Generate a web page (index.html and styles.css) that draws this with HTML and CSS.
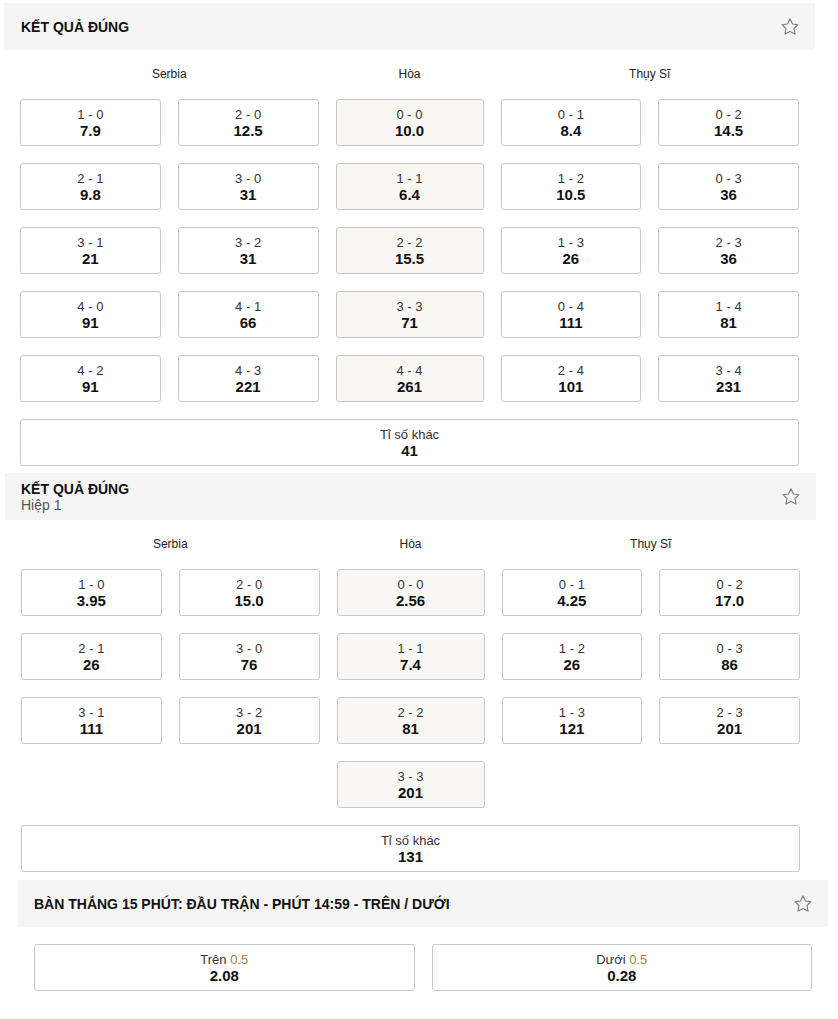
FILE: index.html
```html
<!DOCTYPE html>
<html lang="vi">
<head>
<meta charset="utf-8">
<title>Kết quả đúng</title>
<link rel="stylesheet" href="styles.css">
</head>
<body>

<section class="market market-1">
  <div class="m-head">
    <div class="m-titles"><div class="m-title">KẾT QUẢ ĐÚNG</div></div>
    <svg class="star" viewBox="0 0 20 20" width="20" height="20"><path d="M10 1.8 L12.5 7 L18 7.7 L14 11.5 L15.1 17.1 L10 14.4 L4.9 17.1 L6 11.5 L2 7.7 L7.5 7 Z" fill="none" stroke="#7a7a7a" stroke-width="1.1" stroke-linejoin="round"/></svg>
  </div>
  <div class="m-body">
    <div class="grid5">
      <div class="lbl lbl-home">Serbia</div>
      <div class="lbl lbl-draw">Hòa</div>
      <div class="lbl lbl-away">Thụy Sĩ</div>

      <div class="odd"><span class="o-name">1 - 0</span><span class="o-val">7.9</span></div>
      <div class="odd"><span class="o-name">2 - 0</span><span class="o-val">12.5</span></div>
      <div class="odd draw"><span class="o-name">0 - 0</span><span class="o-val">10.0</span></div>
      <div class="odd"><span class="o-name">0 - 1</span><span class="o-val">8.4</span></div>
      <div class="odd"><span class="o-name">0 - 2</span><span class="o-val">14.5</span></div>

      <div class="odd"><span class="o-name">2 - 1</span><span class="o-val">9.8</span></div>
      <div class="odd"><span class="o-name">3 - 0</span><span class="o-val">31</span></div>
      <div class="odd draw"><span class="o-name">1 - 1</span><span class="o-val">6.4</span></div>
      <div class="odd"><span class="o-name">1 - 2</span><span class="o-val">10.5</span></div>
      <div class="odd"><span class="o-name">0 - 3</span><span class="o-val">36</span></div>

      <div class="odd"><span class="o-name">3 - 1</span><span class="o-val">21</span></div>
      <div class="odd"><span class="o-name">3 - 2</span><span class="o-val">31</span></div>
      <div class="odd draw"><span class="o-name">2 - 2</span><span class="o-val">15.5</span></div>
      <div class="odd"><span class="o-name">1 - 3</span><span class="o-val">26</span></div>
      <div class="odd"><span class="o-name">2 - 3</span><span class="o-val">36</span></div>

      <div class="odd"><span class="o-name">4 - 0</span><span class="o-val">91</span></div>
      <div class="odd"><span class="o-name">4 - 1</span><span class="o-val">66</span></div>
      <div class="odd draw"><span class="o-name">3 - 3</span><span class="o-val">71</span></div>
      <div class="odd"><span class="o-name">0 - 4</span><span class="o-val">111</span></div>
      <div class="odd"><span class="o-name">1 - 4</span><span class="o-val">81</span></div>

      <div class="odd"><span class="o-name">4 - 2</span><span class="o-val">91</span></div>
      <div class="odd"><span class="o-name">4 - 3</span><span class="o-val">221</span></div>
      <div class="odd draw"><span class="o-name">4 - 4</span><span class="o-val">261</span></div>
      <div class="odd"><span class="o-name">2 - 4</span><span class="o-val">101</span></div>
      <div class="odd"><span class="o-name">3 - 4</span><span class="o-val">231</span></div>

      <div class="odd full"><span class="o-name">Tỉ số khác</span><span class="o-val">41</span></div>
    </div>
  </div>
</section>

<section class="market market-2">
  <div class="m-head">
    <div class="m-titles"><div class="m-title">KẾT QUẢ ĐÚNG</div><div class="m-sub">Hiệp 1</div></div>
    <svg class="star" viewBox="0 0 20 20" width="20" height="20"><path d="M10 1.8 L12.5 7 L18 7.7 L14 11.5 L15.1 17.1 L10 14.4 L4.9 17.1 L6 11.5 L2 7.7 L7.5 7 Z" fill="none" stroke="#7a7a7a" stroke-width="1.1" stroke-linejoin="round"/></svg>
  </div>
  <div class="m-body">
    <div class="grid5">
      <div class="lbl lbl-home">Serbia</div>
      <div class="lbl lbl-draw">Hòa</div>
      <div class="lbl lbl-away">Thụy Sĩ</div>

      <div class="odd"><span class="o-name">1 - 0</span><span class="o-val">3.95</span></div>
      <div class="odd"><span class="o-name">2 - 0</span><span class="o-val">15.0</span></div>
      <div class="odd draw"><span class="o-name">0 - 0</span><span class="o-val">2.56</span></div>
      <div class="odd"><span class="o-name">0 - 1</span><span class="o-val">4.25</span></div>
      <div class="odd"><span class="o-name">0 - 2</span><span class="o-val">17.0</span></div>

      <div class="odd"><span class="o-name">2 - 1</span><span class="o-val">26</span></div>
      <div class="odd"><span class="o-name">3 - 0</span><span class="o-val">76</span></div>
      <div class="odd draw"><span class="o-name">1 - 1</span><span class="o-val">7.4</span></div>
      <div class="odd"><span class="o-name">1 - 2</span><span class="o-val">26</span></div>
      <div class="odd"><span class="o-name">0 - 3</span><span class="o-val">86</span></div>

      <div class="odd"><span class="o-name">3 - 1</span><span class="o-val">111</span></div>
      <div class="odd"><span class="o-name">3 - 2</span><span class="o-val">201</span></div>
      <div class="odd draw"><span class="o-name">2 - 2</span><span class="o-val">81</span></div>
      <div class="odd"><span class="o-name">1 - 3</span><span class="o-val">121</span></div>
      <div class="odd"><span class="o-name">2 - 3</span><span class="o-val">201</span></div>

      <div class="odd draw col-draw"><span class="o-name">3 - 3</span><span class="o-val">201</span></div>

      <div class="odd full"><span class="o-name">Tỉ số khác</span><span class="o-val">131</span></div>
    </div>
  </div>
</section>

<section class="market market-3">
  <div class="m-head">
    <div class="m-titles"><div class="m-title">BÀN THẮNG 15 PHÚT: ĐẦU TRẬN - PHÚT 14:59 - TRÊN / DƯỚI</div></div>
    <svg class="star" viewBox="0 0 20 20" width="20" height="20"><path d="M10 1.8 L12.5 7 L18 7.7 L14 11.5 L15.1 17.1 L10 14.4 L4.9 17.1 L6 11.5 L2 7.7 L7.5 7 Z" fill="none" stroke="#7a7a7a" stroke-width="1.1" stroke-linejoin="round"/></svg>
  </div>
  <div class="m-body m-body-ou">
    <div class="grid2">
      <div class="odd"><span class="o-name">Trên <span class="line">0.5</span></span><span class="o-val">2.08</span></div>
      <div class="odd"><span class="o-name">Dưới <span class="line">0.5</span></span><span class="o-val">0.28</span></div>
    </div>
  </div>
</section>

</body>
</html>
```

FILE: styles.css
```css
* { box-sizing: border-box; }

body {
  margin: 0;
  background: #ffffff;
  font-family: "Liberation Sans", Arial, sans-serif;
  color: #111;
}

.market { width: 811px; }
.market-1 { margin: 3px 0 0 4px; }
.market-2 { margin: 7px 0 0 5px; }
.market-3 { margin: 8px 0 0 18px; width: 810px; }

.m-head {
  min-height: 47px;
  background: #f5f5f5;
  display: flex;
  align-items: center;
  justify-content: space-between;
  padding: 8px 15px 7px 16px;
}
.market-1 .m-head { padding-left: 17px; }

.m-title {
  font-size: 14px;
  font-weight: bold;
  line-height: 16px;
  color: #111;
}
.m-sub {
  font-size: 14px;
  line-height: 16px;
  color: #555;
}

.star { display: block; flex: none; }

.m-body { padding: 16px 16px 0 16px; }
.m-body-ou { padding-top: 17px; }

.grid5 {
  display: grid;
  grid-template-columns: 1fr 1fr 148px 1fr 1fr;
  column-gap: 17px;
  row-gap: 17px;
}
.grid2 {
  display: grid;
  grid-template-columns: 1fr 1fr;
  column-gap: 17px;
}

.lbl {
  font-size: 12px;
  line-height: 16px;
  color: #222;
  text-align: center;
}
.lbl-home { grid-column: 1 / 3; }
.lbl-draw { grid-column: 3; }
.lbl-away { grid-column: 4 / 6; }

.odd {
  height: 47px;
  border: 1px solid #c8c8c8;
  border-radius: 3px;
  background: #fff;
  display: flex;
  flex-direction: column;
  align-items: center;
  justify-content: center;
  text-align: center;
}
.odd.draw { background: #f8f7f3; }
.col-draw { grid-column: 3; }
.full { grid-column: 1 / 6; }

.o-name {
  font-size: 13px;
  line-height: 16px;
  color: #333;
}
.o-val {
  font-size: 15px;
  font-weight: bold;
  line-height: 16px;
  color: #111;
}
.line { color: #b07d3e; }
```
